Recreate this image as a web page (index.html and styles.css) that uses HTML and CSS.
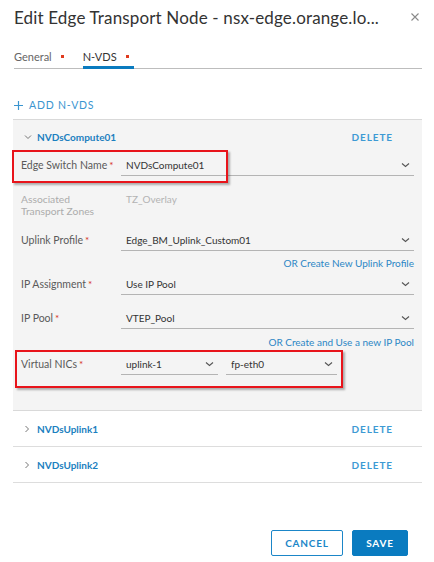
FILE: index.html
```html
<!DOCTYPE html>
<html>
<head>
<meta charset="utf-8">
<link rel="stylesheet" href="styles.css">
</head>
<body>
<div class="dialog">
  <div class="title-bar">
    <h1 class="title">Edit Edge Transport Node - nsx-edge.orange.lo...</h1>
    <svg class="close" width="10" height="10" viewBox="0 0 10 10"><path d="M1.5 1.5 L8.5 8.5 M8.5 1.5 L1.5 8.5" stroke="#8a8a8a" stroke-width="1.1" fill="none"/></svg>
  </div>

  <div class="tabs">
    <div class="tab">General<span class="req-dot"></span></div>
    <div class="tab active">N-VDS<span class="req-dot"></span></div>
  </div>

  <div class="add-link">
    <svg width="9" height="9" viewBox="0 0 9 9"><path d="M4.5 0 V9 M0 4.5 H9" stroke="#3a95d0" stroke-width="1.2" fill="none"/></svg>
    <span>ADD N-VDS</span>
  </div>

  <div class="panel">
    <div class="panel-head">
      <svg class="chev" width="8" height="6" viewBox="0 0 8 6"><path d="M1 1.5 L4 4.5 L7 1.5" stroke="#777" stroke-width="1" fill="none"/></svg>
      <span class="sw-name">NVDsCompute01</span>
      <span class="delete">DELETE</span>
    </div>

    <div class="row r-edge">
      <div class="label">Edge Switch Name<span class="star">*</span></div>
      <div class="select"><span>NVDsCompute01</span><svg class="dd" width="9" height="6" viewBox="0 0 9 6"><path d="M1 1.5 L4.5 4.5 L8 1.5" stroke="#555" stroke-width="1.1" fill="none"/></svg></div>
    </div>

    <div class="row r-assoc">
      <div class="label muted">Associated<br>Transport Zones</div>
      <div class="static">TZ_Overlay</div>
    </div>

    <div class="row r-uplink">
      <div class="label">Uplink Profile<span class="star">*</span></div>
      <div class="select"><span>Edge_BM_Uplink_Custom01</span><svg class="dd" width="9" height="6" viewBox="0 0 9 6"><path d="M1 1.5 L4.5 4.5 L8 1.5" stroke="#555" stroke-width="1.1" fill="none"/></svg></div>
    </div>
    <div class="link-row l-uplink">OR Create New Uplink Profile</div>

    <div class="row r-ipa">
      <div class="label">IP Assignment<span class="star">*</span></div>
      <div class="select"><span>Use IP Pool</span><svg class="dd" width="9" height="6" viewBox="0 0 9 6"><path d="M1 1.5 L4.5 4.5 L8 1.5" stroke="#555" stroke-width="1.1" fill="none"/></svg></div>
    </div>

    <div class="row r-pool">
      <div class="label">IP Pool<span class="star">*</span></div>
      <div class="select"><span>VTEP_Pool</span><svg class="dd" width="9" height="6" viewBox="0 0 9 6"><path d="M1 1.5 L4.5 4.5 L8 1.5" stroke="#555" stroke-width="1.1" fill="none"/></svg></div>
    </div>
    <div class="link-row l-pool">OR Create and Use a new IP Pool</div>

    <div class="row r-nics">
      <div class="label">Virtual NICs<span class="star">*</span></div>
      <div class="nics">
        <div class="select s-uplink"><span>uplink-1</span><svg class="dd" width="9" height="6" viewBox="0 0 9 6"><path d="M1 1.5 L4.5 4.5 L8 1.5" stroke="#555" stroke-width="1.1" fill="none"/></svg></div>
        <div class="select s-fp"><span>fp-eth0</span><svg class="dd" width="9" height="6" viewBox="0 0 9 6"><path d="M1 1.5 L4.5 4.5 L8 1.5" stroke="#555" stroke-width="1.1" fill="none"/></svg></div>
      </div>
    </div>
  </div>

  <div class="collapsed">
    <svg class="chev" width="6" height="8" viewBox="0 0 6 8"><path d="M1.5 1 L4.5 4 L1.5 7" stroke="#777" stroke-width="1" fill="none"/></svg>
    <span class="sw-name">NVDsUplink1</span>
    <span class="delete">DELETE</span>
  </div>
  <div class="collapsed">
    <svg class="chev" width="6" height="8" viewBox="0 0 6 8"><path d="M1.5 1 L4.5 4 L1.5 7" stroke="#777" stroke-width="1" fill="none"/></svg>
    <span class="sw-name">NVDsUplink2</span>
    <span class="delete">DELETE</span>
  </div>

  <div class="footer">
    <button class="btn btn-outline">CANCEL</button>
    <button class="btn btn-primary">SAVE</button>
  </div>

  <div class="callout c-edge"></div>
  <div class="callout c-nics"></div>
</div>
</body>
</html>
```

FILE: styles.css
```css
* { box-sizing: border-box; }
html, body { margin: 0; padding: 0; background: #fff; }
body {
  font-family: Lato, "Open Sans", "Liberation Sans", sans-serif;
  color: #333;
  width: 434px;
  height: 562px;
  overflow: hidden;
}
.dialog {
  position: relative;
  padding: 0 12px 0 13px;
}
.title-bar {
  display: flex;
  align-items: center;
  justify-content: space-between;
  height: 33px;
  padding-left: 1px;
  padding-top: 1px;
}
.title {
  margin: 0;
  font-size: 17px;
  font-weight: 400;
  color: #333;
  white-space: nowrap;
  letter-spacing: 0.15px;
}
.close { margin-right: 2px; }

.tabs {
  display: flex;
  margin-top: 12px;
  margin-left: 1px;
  border-bottom: 1px solid #bdbdbd;
  height: 24px;
}
.tab {
  font-size: 11px;
  color: #666;
  display: flex;
  align-items: flex-start;
  padding-top: 5px;
  padding-right: 5px;
  margin-right: 14px;
}
.tab.active {
  color: #333;
  border-bottom: 3px solid #0a7bbf;
  margin-bottom: -1px;
}
.req-dot {
  display: inline-block;
  width: 3px;
  height: 3px;
  background: #e03a1e;
  margin-left: 9px;
  margin-top: 5px;
}

.add-link {
  display: flex;
  align-items: center;
  gap: 6px;
  margin-top: 29px;
  margin-left: 1px;
  color: #3a95d0;
  font-size: 10.5px;
  letter-spacing: 0.8px;
  height: 14px;
}

.panel {
  margin-top: 7px;
  background: #f4f4f4;
  border-top: 1px solid #d9d9d9;
  border-bottom: 1px solid #d9d9d9;
  padding: 0 8px 35px 8px;
}
.panel-head {
  display: flex;
  align-items: center;
  height: 33px;
  padding-left: 3px;
  padding-right: 21px;
}
.chev { flex: none; }
.sw-name {
  margin-left: 5px;
  font-size: 10px;
  font-weight: 700;
  color: #1b7fc0;
}
.delete {
  margin-left: auto;
  font-size: 10px;
  font-weight: 700;
  letter-spacing: 0.9px;
  color: #3d9ad4;
}

.row {
  display: flex;
  align-items: flex-start;
}
.label {
  width: 100px;
  flex: none;
  font-size: 10.5px;
  color: #5a5a5a;
  line-height: 22px;
  white-space: nowrap;
}
.label.muted {
  color: #acacac;
  line-height: 12px;
  font-size: 10.3px;
}
.star { color: #d6321c; margin-left: 2px; font-size: 10px; }
.select {
  flex: 1;
  display: flex;
  align-items: center;
  justify-content: space-between;
  height: 22px;
  border-bottom: 1px solid #b4b4b4;
  font-size: 10px;
  color: #333;
  padding-left: 5px;
  padding-right: 4px;
}
.static {
  font-size: 10px;
  color: #b3b3b3;
  padding-left: 5px;
  line-height: 12px;
}
.link-row {
  text-align: right;
  font-size: 10px;
  color: #2b86c5;
  line-height: 14px;
}
.r-edge { margin-top: 1px; }
.r-assoc { margin-top: 17px; }
.r-uplink { margin-top: 12px; }
.l-uplink { margin-top: 5px; }
.r-ipa { margin-top: 3px; }
.r-pool { margin-top: 12px; }
.l-pool { margin-top: 6px; }
.r-nics { margin-top: 4px; }
.nics {
  display: flex;
  gap: 8px;
}
.s-uplink { width: 97px; flex: none; }
.s-fp { width: 111px; flex: none; }

.collapsed {
  display: flex;
  align-items: center;
  height: 36px;
  border-bottom: 1px solid #ddd;
  padding-left: 11px;
  padding-right: 29px;
}
.collapsed .sw-name { margin-left: 7px; }

.footer {
  display: flex;
  justify-content: flex-end;
  gap: 9px;
  margin-top: 47px;
  padding-right: 14px;
}
.btn {
  height: 26px;
  font-family: Lato, "Open Sans", sans-serif;
  font-size: 10px;
  font-weight: 700;
  letter-spacing: 0.8px;
  border-radius: 2px;
  padding: 0;
}
.btn-outline {
  width: 72px;
  background: #fff;
  border: 1px solid #1b86c8;
  color: #1b86c8;
}
.btn-primary {
  width: 56px;
  background: #0a7bc0;
  border: 1px solid #0a7bc0;
  color: #fff;
}

.callout {
  position: absolute;
  border: 2px solid #e8141b;
  box-shadow: 2px 2px 2px rgba(0,0,0,0.3);
}
.c-edge { left: 12px; top: 150px; width: 216px; height: 33px; }
.c-nics { left: 15px; top: 350px; width: 328px; height: 38px; }
```
